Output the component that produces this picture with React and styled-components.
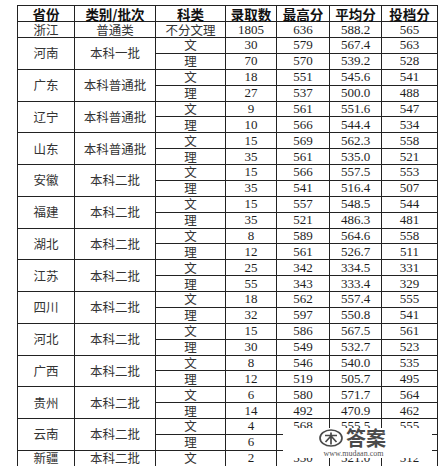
import React from "react";
import styled, { createGlobalStyle } from "styled-components";

const Global = createGlobalStyle`
  html, body { margin: 0; padding: 0; background: #ffffff; }
  body { width: 438px; height: 466px; overflow: hidden; }
`;

const Page = styled.div`
  position: relative;
  padding: 5px 0 0 17px;
  width: 438px;
  height: 466px;
  box-sizing: border-box;
  overflow: hidden;
`;

const Table = styled.table`
  border-collapse: collapse;
  table-layout: fixed;
  width: 420px;
  border: 1px solid #222;
`;

const Row = styled.tr`
  height: ${(p) => p.$h}px;
`;

const Th = styled.th`
  border: 1px solid #222;
  padding: 0;
  font-family: "Noto Sans CJK SC", "Noto Sans", sans-serif;
  font-weight: 700;
  font-size: 13.5px;
  line-height: 14px;
  color: #111;
  text-align: center;
  vertical-align: middle;
  white-space: nowrap;
`;

const Cn = styled.td`
  border: 1px solid #222;
  padding: 0;
  font-family: "Noto Sans CJK SC", "Noto Sans", sans-serif;
  font-weight: 400;
  font-size: 12.5px;
  line-height: 14px;
  color: #333333;
  text-align: center;
  vertical-align: middle;
  white-space: nowrap;
`;

const Num = styled.td`
  border: 1px solid #222;
  padding: 0;
  font-family: "Liberation Serif", "Times New Roman", serif;
  font-size: 13px;
  line-height: 14px;
  color: #1e1e1e;
  text-align: center;
  vertical-align: middle;
  white-space: nowrap;
`;

const Watermark = styled.div`
  position: absolute;
  left: 283px;
  top: 428px;
  width: 149px;
  height: 30px;
  background: #ffffff;
  display: flex;
  flex-direction: column;
  align-items: center;
`;

const Brand = styled.div`
  display: flex;
  align-items: center;
  gap: 3px;
  margin-left: -10px;
  height: 20px;
`;

const BrandText = styled.span`
  font-family: "Noto Sans CJK SC", sans-serif;
  font-weight: 700;
  font-size: 20px;
  line-height: 20px;
  color: #4a4a4a;
`;

const Url = styled.span`
  font-family: "Liberation Serif", serif;
  font-size: 8px;
  line-height: 9px;
  color: #555;
  margin-left: -8px;
  margin-top: 1px;
`;

const cols = [57, 81, 70, 51, 53, 52, 56];

const data = [
  { prov: "浙江", batch: "普通类", items: [["不分文理", "1805", "636", "588.2", "565"]] },
  { prov: "河南", batch: "本科一批", items: [["文", "30", "579", "567.4", "563"], ["理", "70", "570", "539.2", "528"]] },
  { prov: "广东", batch: "本科普通批", items: [["文", "18", "551", "545.6", "541"], ["理", "27", "537", "500.0", "488"]] },
  { prov: "辽宁", batch: "本科普通批", items: [["文", "9", "561", "551.6", "547"], ["理", "10", "566", "544.4", "534"]] },
  { prov: "山东", batch: "本科普通批", items: [["文", "15", "569", "562.3", "558"], ["理", "35", "561", "535.0", "521"]] },
  { prov: "安徽", batch: "本科二批", items: [["文", "15", "566", "557.5", "553"], ["理", "35", "541", "516.4", "507"]] },
  { prov: "福建", batch: "本科二批", items: [["文", "15", "557", "548.5", "544"], ["理", "35", "521", "486.3", "481"]] },
  { prov: "湖北", batch: "本科二批", items: [["文", "8", "589", "564.6", "558"], ["理", "12", "561", "526.7", "511"]] },
  { prov: "江苏", batch: "本科二批", items: [["文", "25", "342", "334.5", "331"], ["理", "55", "343", "333.4", "329"]] },
  { prov: "四川", batch: "本科二批", items: [["文", "18", "562", "557.4", "555"], ["理", "32", "597", "550.8", "541"]] },
  { prov: "河北", batch: "本科二批", items: [["文", "15", "586", "567.5", "561"], ["理", "30", "549", "532.7", "523"]] },
  { prov: "广西", batch: "本科二批", items: [["文", "8", "546", "540.0", "535"], ["理", "12", "519", "505.7", "495"]] },
  { prov: "贵州", batch: "本科二批", items: [["文", "6", "580", "571.7", "564"], ["理", "14", "492", "470.9", "462"]] },
  { prov: "云南", batch: "本科二批", items: [["文", "4", "568", "555.5", "555"], ["理", "6", "", "", ""]] },
  { prov: "新疆", batch: "本科二批", items: [["文", "2", "550", "521.0", "512"]] },
];

const headers = ["省份", "类别/批次", "科类", "录取数", "最高分", "平均分", "投档分"];

function LogoMark() {
  return (
    <svg width="24" height="18" viewBox="0 0 24 18">
      <ellipse cx="12" cy="9" rx="11" ry="8" fill="none" stroke="#4a4a4a" strokeWidth="1.7" />
      <path d="M6 6.5 H18 M12 3.5 V15.5 M12 7 L6.5 13 M12 7 L17.5 13" fill="none" stroke="#4a4a4a" strokeWidth="1.7" />
    </svg>
  );
}

export default function App() {
  return (
    <>
      <Global />
      <Page>
        <Table>
          <colgroup>
            {cols.map((w, i) => (
              <col key={i} style={{ width: w }} />
            ))}
          </colgroup>
          <thead>
            <Row $h={16}>
              {headers.map((h) => (
                <Th key={h}>{h}</Th>
              ))}
            </Row>
          </thead>
          <tbody>
            {data.map((g, gi) =>
              g.items.map((it, ii) => (
                <Row key={`${gi}-${ii}`} $h={gi === 0 ? 16 : 15.88}>
                  {ii === 0 && <Cn rowSpan={g.items.length}>{g.prov}</Cn>}
                  {ii === 0 && <Cn rowSpan={g.items.length}>{g.batch}</Cn>}
                  <Cn>{it[0]}</Cn>
                  <Num>{it[1]}</Num>
                  <Num>{it[2]}</Num>
                  <Num>{it[3]}</Num>
                  <Num>{it[4]}</Num>
                </Row>
              ))
            )}
          </tbody>
        </Table>
        <Watermark>
          <Brand>
            <LogoMark />
            <BrandText>答案</BrandText>
          </Brand>
          <Url>www.mudaan.com</Url>
        </Watermark>
      </Page>
    </>
  );
}
